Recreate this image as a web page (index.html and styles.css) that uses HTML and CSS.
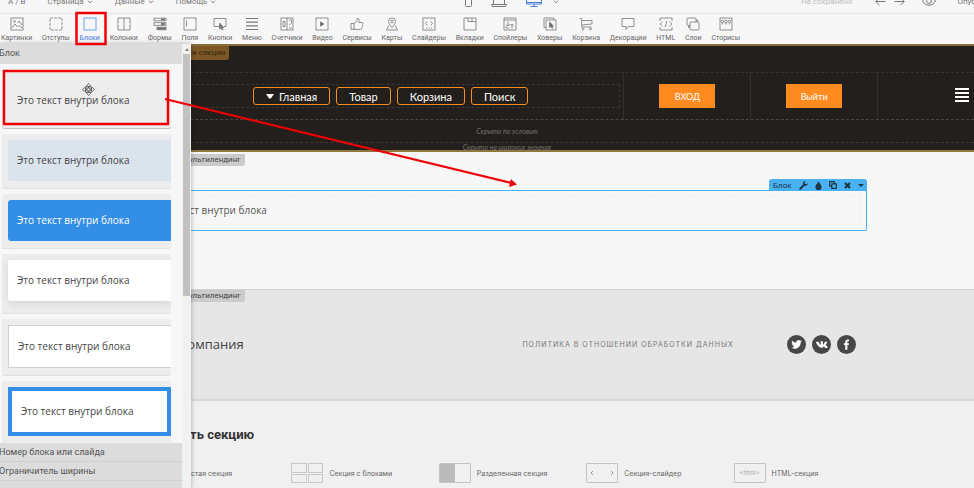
FILE: index.html
```html
<!DOCTYPE html>
<html lang="ru">
<head>
  <meta charset="UTF-8" />
  <meta name="viewport" content="width=device-width, initial-scale=1.0"/>
  <title>Редактор страницы</title>
  <link rel="stylesheet" href="styles.css">
</head>
<body>

<!-- Top menu -->
<header class="topbar">
  <div class="topbar-inner">
    <nav class="menu">
      <button>A / B</button>
      <button>Страница <svg class="chev" viewBox="0 0 6 4"><path d="M1 .8l2 2 2-2"/></svg></button>
      <button>Данные <svg class="chev" viewBox="0 0 6 4"><path d="M1 .8l2 2 2-2"/></svg></button>
      <button>Помощь <svg class="chev" viewBox="0 0 6 4"><path d="M1 .8l2 2 2-2"/></svg></button>
    </nav>
    <div class="devices">
      <button aria-label="Телефон"><svg width="7" height="12" viewBox="0 0 7 12"><rect x=".5" y=".5" width="6" height="11" rx="1"/></svg></button>
      <button aria-label="Ноутбук"><svg width="16" height="12" viewBox="0 0 16 12"><path d="M2.500 9.500V1.500h11v8M.5 9.500h15l-1 2h-13z"/></svg></button>
      <button class="active" aria-label="Компьютер"><svg width="16" height="12" viewBox="0 0 16 12"><path d="M.5.5h15v8.500h-15zM.5 7.500h15M8 9v2M4.500 11.500h7"/></svg></button>
      <button aria-label="Ещё"><svg class="chev" viewBox="0 0 6 4"><path d="M1 .8l2 2 2-2"/></svg></button>
    </div>
    <div class="actions">
      <span class="status">Не сохранено</span>
      <button aria-label="Отменить"><svg width="11" height="9" viewBox="0 0 11 9"><path d="M10.500 4.500H1M4.500.8L.8 4.500l3.700 3.700"/></svg></button>
      <button class="redo" aria-label="Повторить"><svg width="11" height="9" viewBox="0 0 11 9"><path d="M.5 4.500H10M6.500.8l3.700 3.700-3.700 3.700"/></svg></button>
      <button class="eye" aria-label="Просмотр"><svg width="14" height="10" viewBox="0 0 14 10"><path d="M.6 5C2.200 2.200 4.400.8 7 .8S11.800 2.200 13.400 5C11.800 7.800 9.600 9.200 7 9.200S2.200 7.800.6 5z"/><circle cx="7" cy="5" r="2.400"/></svg></button>
      <button>Опубликовать</button>
    </div>
  </div>
</header>

<!-- Elements toolbar -->
<div class="tools">
  <button><svg viewBox="0 0 14 14"><rect x="1" y="1" width="12" height="12"/><path d="M2 11l3-4 2.500 3L9 8.500l3 2.500"/><circle cx="4.500" cy="4.500" r="1"/><path d="M7.500 6l1.500-2 3 4"/></svg>Картинки</button>
  <button><svg viewBox="0 0 14 14"><rect x="1" y="1" width="12" height="12" stroke-dasharray="3 1"/></svg>Отступы</button>
  <button class="active"><svg viewBox="0 0 14 14"><rect x="1" y="1" width="12" height="12"/></svg>Блоки</button>
  <button><svg viewBox="0 0 14 14"><rect x="1" y="1" width="12" height="12"/><path d="M7 1v12"/></svg>Колонки</button>
  <button><svg viewBox="0 0 14 14"><rect x="1" y="1.200" width="12" height="2.600"/><rect x="1" y="5.700" width="12" height="2.600"/><path d="M8 2.500h4M8 7h4" stroke-width="2"/><rect x="4" y="10.200" width="9" height="2.600" fill="#777"/></svg>Формы</button>
  <button><svg viewBox="0 0 14 14"><rect x="1" y="1" width="12" height="12"/><path d="M3.500 3.500v6"/></svg>Поля</button>
  <button><svg viewBox="0 0 14 14"><path d="M6 9.500H1v-8h12v8h-2"/><path d="M6.500 6v6l1.500-1.200L9 13l1-.5-1-2h1.800z" fill="#777"/></svg>Кнопки</button>
  <button><svg viewBox="0 0 14 14"><path d="M1 1.500h12M1 5.200h12M1 8.800h12M1 12.500h12" stroke-width="1.200"/></svg>Меню</button>
  <button><svg viewBox="0 0 14 14"><rect x="1" y="1" width="12" height="12"/><path d="M7 1v12M3 4.500h2v5H3zM9 3h2.500v3L9.500 8M9 10.500l1.500 1 1.500-1.500"/></svg>Счетчики</button>
  <button><svg viewBox="0 0 14 14"><rect x="1" y="1" width="12" height="12"/><path d="M5.500 5v4L9 7z" fill="#666"/></svg>Видео</button>
  <button><svg viewBox="0 0 14 14"><path d="M1 6.500h3v6H1zM4 7l3-3V1.500c1.800-.6 2.500.8 2 2.500L8.500 5.500H12c1.200 0 1.200 1.500.5 2 .6.500.5 1.500-.2 1.900.3.700 0 1.400-.6 1.700 0 .9-.5 1.400-1.200 1.400H6l-2-.7"/></svg>Сервисы</button>
  <button><svg viewBox="0 0 14 14"><path d="M7 10.500C4.500 7.500 3.500 6 3.500 4.500a3.500 3.500 0 017 0C10.500 6 9.500 7.500 7 10.500zM3.800 8.500L1.500 13h11l-2.300-4.500"/><circle cx="7" cy="4.500" r="1.300"/></svg>Карты</button>
  <button><svg viewBox="0 0 14 14"><rect x="1" y="1" width="12" height="12"/><path d="M5.500 4.500l-2 2 2 2M8.500 4.500l2 2-2 2M4 11h1M6.500 11h1M9 11h1"/></svg>Слайдеры</button>
  <button><svg viewBox="0 0 14 14"><path d="M1 1h12v12H1zM5 1v3.500h8M9 1v3.500"/></svg>Вкладки</button>
  <button><svg viewBox="0 0 14 14"><path d="M1 1h12v12H1zM1 3h12M5 4.500V9M3.300 7.300L5 9l1.700-1.700M9 11.500V7M7.300 8.700L9 7l1.700 1.700M3 9v2h3"/></svg>Спойлеры</button>
  <button><svg viewBox="0 0 14 14"><path d="M3 10.500H1V1h10v2"/><rect x="3" y="3" width="10" height="10"/><path d="M6.500 5v5.500L8 9.300l1 2 .8-.4-.9-1.800 1.600-.2z" fill="#666"/></svg>Ховеры</button>
  <button><svg viewBox="0 0 14 14"><path d="M.5 1.500h2.200V10h9.800M2.700 3.500h10.300v3.500l-10.300 1"/><circle cx="4" cy="12" r="1"/><circle cx="11.500" cy="12" r="1"/></svg>Корзина</button>
  <button><svg viewBox="0 0 14 14"><path d="M1 1.500h12v8H7.500L5 12.500v-3H1z"/></svg>Декорации</button>
  <button><svg viewBox="0 0 14 14"><path d="M1 4V1h12v3M1 10v3h12v-3M3.500 4.500L1 7l2.500 2.500M10.500 4.500L13 7l-2.500 2.500M8 4L6 10"/></svg>HTML</button>
  <button><svg viewBox="0 0 14 14"><rect x="1" y="1" width="9" height="7.500" rx="1"/><rect x="4" y="5" width="9" height="8" rx="1" fill="#f7f7f7"/><path d="M2.500 8.500v2H4M10 3h1.500v2"/></svg>Слои</button>
  <button><svg viewBox="0 0 14 14"><rect x="1" y="1" width="12" height="12"/><circle cx="3.500" cy="4.500" r="1.300"/><circle cx="7" cy="4.500" r="1.300"/><circle cx="10.500" cy="4.500" r="1.300"/><path d="M3.500 6v1.500M7 6v1.500M10.500 6v1.500"/></svg>Сторисы</button>
</div>

<div class="workspace">

  <!-- Page being edited -->
  <main class="canvas">
    <section class="head-section">
      <span class="tag tag-gold">Настройки секции</span>
      <div class="head-row">
        <nav class="site-nav">
          <a href="#"><svg width="8" height="5" viewBox="0 0 8 5"><path d="M0 0h8L4.800 4.500H3.200z" fill="#fff"/></svg>Главная</a>
          <a href="#">Товар</a>
          <a href="#">Корзина</a>
          <a href="#">Поиск</a>
        </nav>
        <div class="head-cell"><button class="orange">ВХОД</button></div>
        <div class="head-cell"><button class="orange">Выйти</button></div>
        <div class="head-burger"><button aria-label="Меню"><svg width="14" height="14" viewBox="0 0 14 14"><path d="M0 1h14M0 5h14M0 9h14M0 13h14" stroke="#fff" stroke-width="2"/></svg></button></div>
      </div>
      <p class="hidden-note">Скрыто по условию</p>
      <p class="hidden-note last">Скрыто на широких экранах</p>
    </section>

    <section class="text-section">
      <span class="tag">Мультилендинг</span>
      <div class="block">
        <div class="block-bar">
          <span>Блок</span>
          <button aria-label="Настройки"><svg width="9" height="9" viewBox="0 0 9 9"><path d="M1.300 7.700l3.400-3.400" stroke="#1c3444" stroke-width="2" stroke-linecap="round"/><path d="M8.600 2.100L7.200 3.300 5.800 2.900 5.500 1.700 6.900.4C5 0 3.600 1.400 4 3.200L5.600 5C7.500 5.300 9 4 8.600 2.100z" fill="#1c3444"/></svg></button>
          <button aria-label="Цвет"><svg width="7" height="9" viewBox="0 0 7 9"><path d="M3.500 0C4.200 2.500 6.600 3.700 6.600 5.900a3.100 3.100 0 01-6.200 0C.4 3.700 2.800 2.500 3.500 0z" fill="#1c3444"/></svg></button>
          <button aria-label="Копировать"><svg width="8" height="8" viewBox="0 0 8 8"><path d="M2.500 5.200H.7V.7h4.500v1.800M2.800 2.800h4.500v4.500H2.800z" fill="none" stroke="#1c3444" stroke-width="1.200"/></svg></button>
          <button aria-label="Удалить"><svg width="7" height="7" viewBox="0 0 7 7"><path d="M1 1l5 5M6 1L1 6" stroke="#1c3444" stroke-width="2.200"/></svg></button>
          <button aria-label="Ещё"><svg width="6" height="3" viewBox="0 0 6 3"><path d="M0 0h6L3 3z" fill="#1c3444"/></svg></button>
        </div>
        <p>Это текст внутри блока</p>
      </div>
    </section>

    <section class="footer-section">
      <span class="tag">Мультилендинг</span>
      <div class="footer-row">
        <h2>Компания</h2>
        <a class="policy" href="#">ПОЛИТИКА В ОТНОШЕНИИ ОБРАБОТКИ ДАННЫХ</a>
        <div class="socials">
          <a href="#" aria-label="Twitter"><svg viewBox="0 0 20 20"><path d="M15.500 6.300c-.4.200-.8.300-1.300.4.500-.3.800-.7 1-1.200-.4.200-.9.400-1.400.5a2.250 2.250 0 00-3.900 2C8 8 6.400 7.100 5.300 5.700c-.6 1-.3 2.300.7 3-.4 0-.7-.1-1-.3 0 1.100.8 2 1.800 2.300-.3.100-.7.100-1 0 .3.900 1.100 1.600 2.100 1.600-1 .8-2.200 1.100-3.400 1 4.600 2.800 10-.2 9.900-5.800.4-.3.800-.7 1.100-1.200z"/></svg></a>
          <a href="#" aria-label="VK"><svg viewBox="0 0 20 20"><path d="M10.200 13.500h1c.5-.1.300-1.300 1-1.500.7-.2 1.500 1.500 2.400 1.600h1.500c1-.2.300-1.200-1.300-2.700-.7-.6-.4-.6.500-1.900.8-1.100 1.100-1.900.4-1.900h-1.900c-.6.100-.9 2.500-1.900 2.800-.7 0-.2-2.300-.4-2.900-.2-.6-2.500-.5-2.800 0 .9.200.7 3.100.2 3.100C8 10.100 7.200 7.400 6.800 7.200H4.700c-1.400.4 1.900 6.200 5.500 6.300z"/></svg></a>
          <a href="#" aria-label="Facebook"><svg viewBox="0 0 20 20"><path d="M8.700 15.500v-5H7.200V8.700h1.500V7.300c0-1.700.9-2.600 2.400-2.600h1.500v1.900h-.9c-.6 0-.8.300-.8.800v1.300h1.700l-.3 1.800h-1.400v5z"/></svg></a>
        </div>
      </div>
    </section>

    <section class="add-section">
      <h3>Добавить секцию</h3>
      <div class="section-types">
        <button><i class="thumb"></i>Пустая секция</button>
        <button><i class="thumb thumb-blocks"><b></b><b></b><b></b><b></b></i>Секция с блоками</button>
        <button><i class="thumb thumb-split"></i>Разделенная секция</button>
        <button><i class="thumb thumb-slider"><svg viewBox="0 0 4 6"><path d="M3 1L1 3l2 2"/></svg><svg viewBox="0 0 4 6"><path d="M1 1l2 2-2 2"/></svg></i>Секция-слайдер</button>
        <button><i class="thumb thumb-html">&lt;html&gt;</i>HTML-секция</button>
      </div>
    </section>
  </main>

  <!-- Blocks panel -->
  <aside class="panel">
    <div class="panel-body">
      <h4>Блок</h4>
      <div class="samples">
        <div class="sample sample-plain"><div>Это текст внутри блока</div></div>
        <div class="sample sample-pale"><div>Это текст внутри блока</div></div>
        <div class="sample sample-blue"><div>Это текст внутри блока</div></div>
        <div class="sample sample-shadow"><div>Это текст внутри блока</div></div>
        <div class="sample sample-line"><div>Это текст внутри блока</div></div>
        <div class="sample sample-frame"><div>Это текст внутри блока</div></div>
      </div>
      <h4>Номер блока или слайда</h4>
      <h4>Ограничитель ширины</h4>
      <h4></h4>
    </div>
    <div class="scrollbar"><svg width="4" height="3" viewBox="0 0 4 3"><path d="M0 3l2-3 2 3z" fill="#888"/></svg><div class="thumb-bar"></div></div>
  </aside>
</div>

<!-- Hint marks over the editor -->
<svg class="marks" width="540" height="200" viewBox="0 0 540 200">
  <g fill="none" stroke="#ee0008" stroke-width="2.500">
    <rect x="76.500" y="13" width="29" height="31"/>
    <rect x="4" y="71" width="164" height="53"/>
    <path d="M165 99L512 183" stroke-width="2.200"/>
  </g>
  <path d="M517 184.500l-8 2.500 1.800-8z" fill="#ee0008"/>
  <g fill="#fff" stroke="#444" stroke-width=".8">
    <path d="M88.500 83.500l2.500 3h-5zM88.500 95.500l2.500-3h-5zM82.500 89.500l3-2.500v5zM94.500 89.500l-3-2.500v5z"/>
    <path d="M88.500 86.500v6M85.500 89.500h6"/>
    <rect x="87" y="88" width="3" height="3"/>
  </g>
</svg>

</body>
</html>
```

FILE: styles.css
```css
:root {
  --orange: #ff8b20;
  --blue: #48b2f5;
  --dark: #231f1c;
}

* {
  box-sizing: border-box;
}

body {
  margin: 0;
  height: 100vh;
  display: flex;
  flex-direction: column;
  overflow: hidden;
  position: relative;
  background: #f7f7f7;
  font-family: Roboto, sans-serif;
  color: #555;
}

h2, h3, h4, p {
  margin: 0;
  font-weight: normal;
}

button {
  padding: 0;
  border: none;
  background: none;
  font: inherit;
  color: inherit;
  white-space: nowrap;
  cursor: pointer;
}

a {
  color: inherit;
  text-decoration: none;
}

/* Top menu, scrolled half out of view */
.topbar {
  flex: none;
  height: 14px;
  overflow: hidden;
  border-bottom: 1px solid #e6e6e6;
  font-size: 8px;
  color: #777;
}

.topbar-inner {
  height: 26px;
  margin-top: -12px;
  display: grid;
  grid-template-columns: 465fr 336fr 173fr;
  align-items: center;
}

.topbar svg {
  display: block;
  fill: none;
  stroke: #777;
}

.topbar .chev {
  display: inline-block;
  width: 6px;
  height: 4px;
  margin-left: 1px;
}

.menu {
  display: flex;
  gap: 22px;
  padding-left: 8px;
}

.devices {
  display: flex;
  align-items: center;
  gap: 19px;
}

.devices button:last-child {
  margin-left: -9px;
}

.devices .active svg {
  stroke: #4a7fe0;
}

.actions {
  display: flex;
  align-items: center;
  min-width: 0;
}

.status {
  color: #bbb;
  margin-right: 23px;
  white-space: nowrap;
}

.redo {
  margin-left: 8px;
}

.eye {
  margin: 0 21px 0 17px;
}

/* Elements toolbar */
.tools {
  flex: none;
  display: flex;
  justify-content: space-between;
  width: 76%;
  height: 30px;
  padding: 3px 0 0 1px;
}

.tools button {
  display: flex;
  flex-direction: column;
  align-items: center;
  gap: 2px;
  font-size: 7px;
  line-height: 10px;
  color: #666;
}

.tools svg {
  width: 14px;
  height: 14px;
  fill: none;
  stroke: #777;
  stroke-width: .8;
}

.tools .active {
  color: #3f78dc;
}

.tools .active svg {
  stroke: #4a8fe8;
}

.workspace {
  flex: 1;
  min-height: 0;
  position: relative;
}

/* Page being edited */
.canvas {
  height: 100%;
  padding-left: 40px;
  overflow: hidden;
  display: flex;
  flex-direction: column;
}

.tag {
  display: inline-block;
  margin-left: 138px;
  padding: 0 4px;
  border-radius: 0 0 3px 3px;
  background: #cbcbcb;
  font-family: Roboto, sans-serif;
  font-size: 8px;
  line-height: 12px;
  color: #444;
}

.tag-gold {
  margin-left: 112px;
  background: #7b5826;
  line-height: 14px;
  color: #35260f;
}

.head-section {
  height: 108px;
  border-top: 2px solid #8a6c3a;
  border-bottom: 2px solid #8f773f;
  background: var(--dark);
  display: flex;
  flex-direction: column;
  align-items: flex-start;
  font-family: Lato, sans-serif;
}

.head-row {
  width: 100%;
  height: 48px;
  margin-top: 12px;
  padding-left: 118px;
  display: grid;
  grid-template-columns: 466fr 127fr 127fr 97fr;
  border-top: 1px dashed #38342f;
  border-bottom: 1px dashed #4a4642;
}

.site-nav {
  margin: 11px 3px;
  display: flex;
  justify-content: center;
  align-items: center;
  gap: 6px;
  border: 1px dashed #3a3632;
}

.site-nav a {
  display: flex;
  align-items: center;
  gap: 5px;
  height: 18px;
  padding: 0 12px;
  border: 1px solid var(--orange);
  border-radius: 3px;
  font-size: 11px;
  color: #fff;
}

.head-cell {
  display: flex;
  align-items: center;
  justify-content: center;
  border-left: 1px solid #34302c;
}

.orange {
  width: 56px;
  height: 24px;
  background: var(--orange);
  font-size: 9px;
  color: #fff;
}

.head-burger {
  display: flex;
  align-items: center;
  justify-content: flex-end;
  padding: 0 5px 3px 0;
  border-left: 1px solid #34302c;
}

.head-burger svg {
  display: block;
}

.hidden-note {
  width: 100%;
  height: 23px;
  border-bottom: 1px dashed #3c3834;
  font-size: 7px;
  font-style: italic;
  line-height: 23px;
  text-align: center;
  color: #77726d;
}

.hidden-note.last {
  height: 7px;
  border: none;
  line-height: 8px;
}

.text-section {
  height: 137px;
  padding-top: 2px;
  display: flex;
  flex-direction: column;
  align-items: flex-start;
}

.block {
  position: relative;
  align-self: center;
  width: 77%;
  margin-top: 24px;
  padding: 5px;
  border: 1px solid var(--blue);
  border-radius: 1px;
  font-family: "Open Sans", sans-serif;
  font-size: 10px;
  color: #555;
}

.block p {
  line-height: 27px;
  border: 1px dashed #f0f0f0;
}

.block-bar {
  position: absolute;
  right: -1px;
  bottom: 100%;
  height: 12px;
  padding: 0 3px 0 4px;
  display: flex;
  align-items: center;
  gap: 7px;
  border-radius: 3px 3px 0 0;
  background: var(--blue);
  font-family: Roboto, sans-serif;
  font-size: 8px;
  color: #1c3444;
}

.block-bar svg {
  display: block;
}

.footer-section {
  height: 112px;
  border-top: 1px solid #d0d0d0;
  border-bottom: 2px solid #d8d8d8;
  background: #e6e6e6;
  display: flex;
  flex-direction: column;
  align-items: flex-start;
}

.footer-row {
  width: 77%;
  margin: 32px auto 0;
  padding: 0 11px 0 32px;
  display: flex;
  align-items: center;
}

.footer-row h2 {
  width: 343px;
  font-family: "Open Sans", sans-serif;
  font-size: 13px;
  line-height: 20px;
  color: #444;
}

.policy {
  flex: 1;
  font-family: Inter, sans-serif;
  font-size: 7px;
  letter-spacing: 1px;
  white-space: nowrap;
  color: #777;
}

.socials {
  display: flex;
  gap: 6px;
}

.socials a {
  width: 19px;
  height: 19px;
  border-radius: 50%;
  background: #474747;
}

.socials svg {
  display: block;
  fill: #fff;
}

.add-section {
  flex: 1;
  padding: 26px 93px 0 104px;
  background: #f0f0f0;
}

.add-section h3 {
  font-size: 13px;
  font-weight: bold;
  line-height: 16px;
  color: #333;
}

.section-types {
  display: grid;
  grid-template-columns: repeat(5, 1fr);
  margin-top: 20px;
}

.section-types button {
  display: flex;
  align-items: center;
  gap: 6px;
  font-family: Inter, sans-serif;
  font-size: 7px;
  color: #666;
}

.thumb {
  width: 32px;
  height: 20px;
  border: 1px solid #c4c4c4;
  border-radius: 1px;
  font-style: normal;
}

.thumb-blocks {
  display: grid;
  grid-template-columns: 1fr 1fr;
  gap: 1px;
  border: none;
}

.thumb-blocks b {
  border: 1px solid #c8c8c8;
}

.thumb-split {
  background: linear-gradient(90deg, #bbb 50%, transparent 50%);
}

.thumb-slider {
  display: flex;
  align-items: center;
  justify-content: space-between;
  padding: 0 3px;
}

.thumb-slider svg {
  width: 4px;
  height: 6px;
  fill: none;
  stroke: #999;
}

.thumb-html {
  font-size: 6px;
  line-height: 18px;
  text-align: center;
  color: #aaa;
}

/* Blocks panel over the page */
.panel {
  position: absolute;
  top: 0;
  bottom: 0;
  left: 0;
  width: 191px;
  display: flex;
  background: #f7f7f7;
  box-shadow: 0 0 5px rgba(0,0,0,0.3);
  overflow: hidden;
}

.panel-body {
  flex: 1;
}

.panel h4 {
  height: 19px;
  border-bottom: 1px solid #d0d0d0;
  background: #dcdcdc;
  font-size: 9px;
  line-height: 19px;
  text-indent: -1px;
  color: #555;
}

.panel h4:first-child {
  height: 20px;
  border: none;
}

.samples {
  display: flex;
  flex-direction: column;
  gap: 6px;
  padding: 6px 11px 0 2px;
}

.sample {
  padding: 6px 0 7px 6px;
  border-radius: 2px;
  background: #ededed;
  box-shadow: 0 1px 0 #e0e0e0;
  font-family: "Open Sans", sans-serif;
  font-size: 10px;
  color: #444;
}

.sample div {
  padding-left: 9px;
  border-radius: 3px 0 0 3px;
  line-height: 41px;
}

.sample-plain {
  padding: 10px 0 7px 6px;
  box-shadow: 0 1px 0 #c4c4c4;
}

.sample-pale div {
  background: #dbe3ed;
}

.sample-blue div {
  background: #328ee6;
  color: #fff;
}

.sample-shadow {
  padding-bottom: 12px;
  overflow: hidden;
}

.sample-shadow div {
  background: #fff;
  box-shadow: 0 3px 8px rgba(0,0,0,0.1);
}

.sample-line div {
  border: 1px solid #cfcfcf;
  border-right: none;
  border-radius: 0;
  background: #fff;
}

.sample-frame div {
  border: 4px solid #328ee6;
  border-radius: 0;
  background: #fff;
}

.scrollbar {
  width: 9px;
  display: flex;
  flex-direction: column;
  align-items: center;
  padding-top: 4px;
  background: #f1f1f1;
}

.thumb-bar {
  width: 7px;
  height: 55%;
  margin-top: 3px;
  background: #c1c1c1;
}

.marks {
  position: absolute;
  top: 0;
  left: 0;
  pointer-events: none;
}
```
